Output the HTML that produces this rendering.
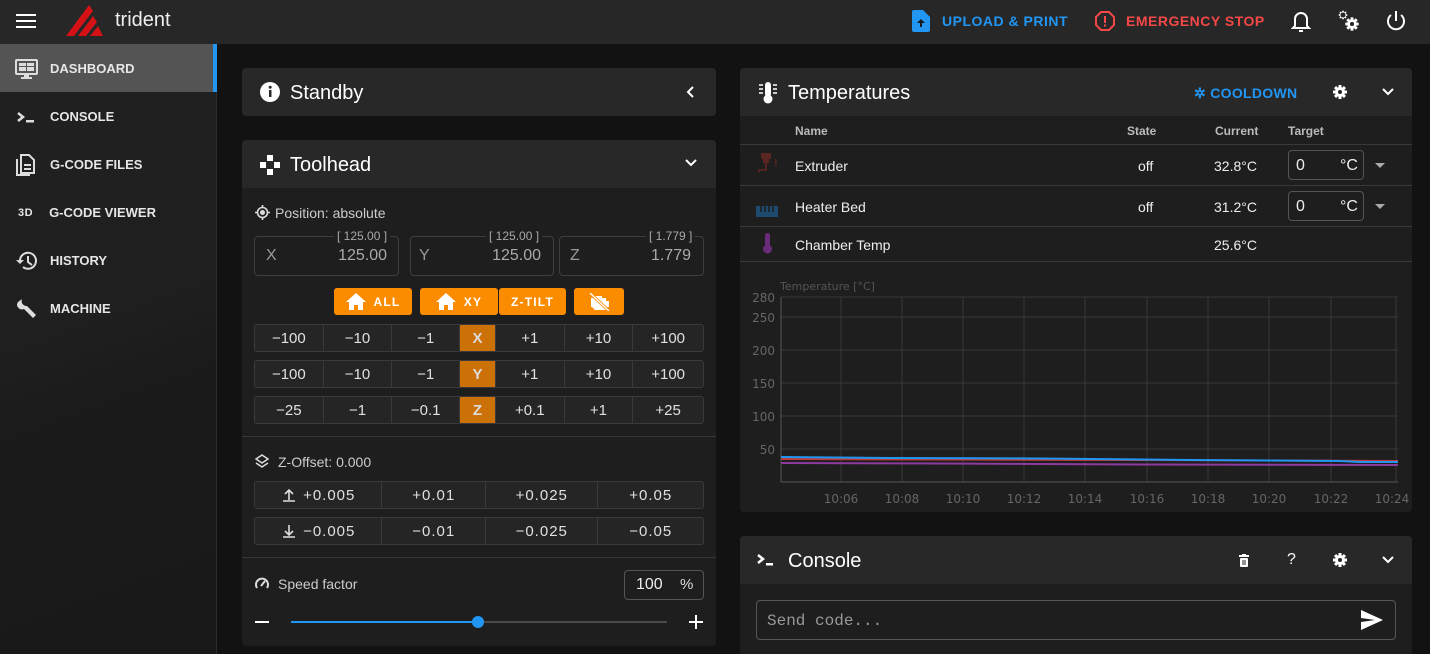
<!DOCTYPE html>
<html style="height:654px;overflow:hidden"><head><meta charset="utf-8"><style>
*{box-sizing:border-box;margin:0;padding:0}
body{width:1430px;height:654px;overflow:hidden;background:#121212;font-family:"Liberation Sans",sans-serif;color:#fff;position:relative}
.a{position:absolute}
.top{left:0;top:0;width:1430px;height:44px;background:#272727}
.side{left:0;top:44px;width:217px;height:610px;background:linear-gradient(160deg,#202020 0%,#1f1f1f 45%,#1a1a1a 60%,#191919 100%);border-right:1px solid #2c2c2c}
.nav{left:0;width:217px;height:47px;display:flex;align-items:center;font-size:13px;font-weight:bold;color:#e6e6e6}
.nav svg{margin-left:15px;margin-right:12px}
.card{background:#1e1e1e;border-radius:4px}
.hd{background:#282828;height:48px;border-radius:4px 4px 0 0;display:flex;align-items:center;font-size:20px;padding-top:2px}
.box{border:1px solid #3e3e3e;border-radius:4px}
.row{display:flex;border:1px solid #3a3a3a;border-radius:3px;overflow:hidden;background:#252525}
.row div{display:flex;align-items:center;justify-content:center;border-right:1px solid #3a3a3a;font-size:15px;color:#e0e0e0}
.row div:last-child{border-right:none}
.ax{background:#cc7108;color:#ddd!important;font-weight:bold}
.ob{background:#fb8c00;border-radius:3px;height:27px;top:288px;display:flex;align-items:center;justify-content:center;font-size:12px;font-weight:bold;letter-spacing:1.2px;color:#fff}
.th{font-size:12px;font-weight:bold;color:#bbb}
.t{font-size:14px;color:#eee}
</style></head><body>
<svg width="0" height="0" style="position:absolute"><defs>
<g id="gear"><circle cx="0" cy="0" r="5" fill="#fff"/><g fill="#fff"><rect x="-1.5" y="-7" width="3" height="14"/><rect x="-1.5" y="-7" width="3" height="14" transform="rotate(45)"/><rect x="-1.5" y="-7" width="3" height="14" transform="rotate(90)"/><rect x="-1.5" y="-7" width="3" height="14" transform="rotate(135)"/></g><circle cx="0" cy="0" r="2" fill="#282828"/></g>
</defs></svg>
<div class="a top"></div>
<svg class="a" style="left:16px;top:13px" width="20" height="16"><rect y="1" width="20" height="2" fill="#fff"/><rect y="7" width="20" height="2" fill="#fff"/><rect y="13" width="20" height="2" fill="#fff"/></svg>
<svg class="a" style="left:66px;top:5px" width="38" height="32"><polygon points="0,31 23,0 27,6 8,31" fill="#d41216"/><polygon points="12,31 27,11 31,17 20,31" fill="#d41216"/><polygon points="24,31 32,21 37,31" fill="#d41216"/></svg>
<div class="a" style="left:115px;top:9px;font-size:20px;color:#eee">trident</div>
<svg class="a" style="left:912px;top:10px" width="18" height="22"><path d="M0 2a2 2 0 0 1 2-2h9l7 7v13a2 2 0 0 1-2 2H2a2 2 0 0 1-2-2z" fill="#2196f3"/><path d="M9 9l-4 4h3v4h2v-4h3z" fill="#1b1b1b"/></svg>
<div class="a" style="left:942px;top:13px;font-size:14px;font-weight:bold;letter-spacing:0.5px;color:#2196f3">UPLOAD &amp; PRINT</div>
<svg class="a" style="left:1095px;top:11px" width="20" height="20"><polygon points="6,1 14,1 19,6 19,14 14,19 6,19 1,14 1,6" fill="none" stroke="#f44848" stroke-width="2"/><rect x="9" y="5" width="2" height="7" fill="#f44848"/><rect x="9" y="13.5" width="2" height="2" fill="#f44848"/></svg>
<div class="a" style="left:1126px;top:13px;font-size:14px;font-weight:bold;letter-spacing:0.5px;color:#f44848">EMERGENCY STOP</div>
<svg class="a" style="left:1291px;top:9px" width="20" height="24"><path d="M4 17V10a6 6 0 0 1 12 0v7l2 2H2z" fill="none" stroke="#fff" stroke-width="2"/><rect x="8" y="21" width="4" height="2" fill="#fff"/></svg>
<svg class="a" style="left:1337px;top:9px" width="24" height="24"><g transform="translate(6,6) scale(0.6)"><use href="#gear"/></g><rect x="3.5" y="3.5" width="5" height="5" rx="2.5" fill="#272727"/><g transform="translate(15,15) scale(0.95)"><use href="#gear"/></g><circle cx="15" cy="15" r="2" fill="#272727"/></svg>
<svg class="a" style="left:1385px;top:10px" width="22" height="22"><path d="M6 5a8 8 0 1 0 10 0" fill="none" stroke="#fff" stroke-width="2"/><rect x="10" y="1" width="2" height="10" fill="#fff"/></svg>

<div class="a side"></div>
<div class="a" style="left:0;top:44px;width:213px;height:48px;background:#545454"></div>
<div class="a" style="left:213px;top:44px;width:4px;height:48px;background:#2196f3"></div>
<div class="a nav" style="top:45px"><svg width="23" height="20"><rect x="1" y="1" width="21" height="14" rx="1" fill="none" stroke="#ddd" stroke-width="2"/><rect x="4" y="4" width="7" height="3" fill="#ddd"/><rect x="12" y="4" width="7" height="3" fill="#ddd"/><rect x="4" y="8" width="7" height="4" fill="#ddd"/><rect x="12" y="8" width="7" height="4" fill="#ddd"/><rect x="9" y="15" width="5" height="3" fill="#ddd"/><rect x="6" y="18" width="11" height="2" fill="#ddd"/></svg>DASHBOARD</div>
<div class="a nav" style="top:93px"><svg width="23" height="20"><path d="M3 6l5 4-5 4" fill="none" stroke="#ddd" stroke-width="2.5"/><rect x="11" y="13" width="8" height="2.5" fill="#ddd"/></svg>CONSOLE</div>
<div class="a nav" style="top:141px"><svg width="23" height="22"><path d="M2 5v16h13" fill="none" stroke="#ddd" stroke-width="2"/><path d="M6 1h8l5 5v13H6z" fill="none" stroke="#ddd" stroke-width="2"/><rect x="9" y="10" width="7" height="2" fill="#ddd"/><rect x="9" y="14" width="7" height="2" fill="#ddd"/></svg>G-CODE FILES</div>
<div class="a nav" style="top:189px"><span style="margin-left:18px;margin-right:16px;font-size:11px;font-weight:bold;letter-spacing:0.5px">3D</span>G-CODE VIEWER</div>
<div class="a nav" style="top:237px"><svg width="23" height="22"><path d="M5 11a8 8 0 1 1 3 6" fill="none" stroke="#ddd" stroke-width="2"/><path d="M1 10h8l-4 4z" fill="#ddd"/><path d="M13 6v6l4 3" fill="none" stroke="#ddd" stroke-width="2"/></svg>HISTORY</div>
<div class="a nav" style="top:285px"><svg width="23" height="22"><path d="M3 4l4-3 0 0a5 5 0 0 0 5 7l9 9-3 3-9-9a5 5 0 0 1-7-5z" fill="#ddd"/></svg>MACHINE</div>

<!-- Standby -->
<div class="a card" style="left:242px;top:68px;width:474px;height:48px"><div class="hd" style="padding-left:48px;border-radius:4px">Standby</div></div>
<svg class="a" style="left:260px;top:82px" width="20" height="20"><circle cx="10" cy="10" r="10" fill="#fff"/><rect x="9" y="8" width="2.5" height="7" fill="#282828"/><circle cx="10.2" cy="5.3" r="1.5" fill="#282828"/></svg>
<svg class="a" style="left:685px;top:85px" width="12" height="14"><path d="M8 2L3 7l5 5" fill="none" stroke="#fff" stroke-width="2"/></svg>

<!-- Toolhead -->
<div class="a card" style="left:242px;top:140px;width:474px;height:506px"><div class="hd" style="padding-left:48px">Toolhead</div></div>
<svg class="a" style="left:260px;top:155px" width="20" height="20"><rect x="7" y="0" width="6" height="6" fill="#fff"/><rect x="0" y="7" width="6" height="6" fill="#fff"/><rect x="14" y="7" width="6" height="6" fill="#fff"/><rect x="7" y="14" width="6" height="6" fill="#fff"/></svg>
<svg class="a" style="left:684px;top:157px" width="14" height="12"><path d="M2 3l5 5 5-5" fill="none" stroke="#fff" stroke-width="2"/></svg>
<svg class="a" style="left:255px;top:205px" width="15" height="15"><circle cx="7.5" cy="7.5" r="5" fill="none" stroke="#ddd" stroke-width="1.6"/><circle cx="7.5" cy="7.5" r="2.5" fill="#ddd"/><path d="M7.5 0v2.5M7.5 12.5V15M0 7.5h2.5M12.5 7.5H15" stroke="#ddd" stroke-width="1.6"/></svg>
<div class="a" style="left:275px;top:205px;font-size:14px;color:#ccc">Position: absolute</div>
<div class="a box" style="left:254px;top:236px;width:145px;height:40px"></div>
<div class="a box" style="left:410px;top:236px;width:144px;height:40px"></div>
<div class="a box" style="left:559px;top:236px;width:145px;height:40px"></div>
<div class="a" style="left:334px;top:229px;padding:0 3px;background:#1e1e1e;font-size:12px;color:#aaa">[ 125.00 ]</div>
<div class="a" style="left:486px;top:229px;padding:0 3px;background:#1e1e1e;font-size:12px;color:#aaa">[ 125.00 ]</div>
<div class="a" style="left:646px;top:229px;padding:0 3px;background:#1e1e1e;font-size:12px;color:#aaa">[ 1.779 ]</div>
<div class="a" style="left:266px;top:247px;font-size:16px;color:#999">X</div><div class="a" style="left:320px;top:247px;width:67px;text-align:right;font-size:16px;color:#aaa">125.00</div>
<div class="a" style="left:419px;top:247px;font-size:16px;color:#999">Y</div><div class="a" style="left:474px;top:247px;width:67px;text-align:right;font-size:16px;color:#aaa">125.00</div>
<div class="a" style="left:570px;top:247px;font-size:16px;color:#999">Z</div><div class="a" style="left:624px;top:247px;width:67px;text-align:right;font-size:16px;color:#aaa">1.779</div>
<div class="a ob" style="left:334px;width:78px"><svg width="20" height="17" style="margin-right:8px"><path d="M10 0L0 9h3v8h5v-5h4v5h5V9h3z" fill="#fff"/></svg>ALL</div>
<div class="a ob" style="left:420px;width:78px"><svg width="20" height="17" style="margin-right:8px"><path d="M10 0L0 9h3v8h5v-5h4v5h5V9h3z" fill="#fff"/></svg>XY</div>
<div class="a ob" style="left:499px;width:67px">Z-TILT</div>
<div class="a ob" style="left:574px;width:50px"><svg width="24" height="18"><path d="M4 5h3V3h8v2h4v3h3v6h-3v3H8l-3-3H4z" fill="#fff"/><path d="M3 0l19 18" stroke="#fb8c00" stroke-width="3"/><path d="M3 0l19 18" stroke="#fff" stroke-width="1.4"/></svg></div>
<div class="a row" style="left:254px;top:324px;width:450px;height:28px"><div style="width:69px">−100</div><div style="width:69px">−10</div><div style="width:68px">−1</div><div class="ax" style="width:36px">X</div><div style="width:69px">+1</div><div style="width:69px">+10</div><div style="width:70px">+100</div></div>
<div class="a row" style="left:254px;top:360px;width:450px;height:28px"><div style="width:69px">−100</div><div style="width:69px">−10</div><div style="width:68px">−1</div><div class="ax" style="width:36px">Y</div><div style="width:69px">+1</div><div style="width:69px">+10</div><div style="width:70px">+100</div></div>
<div class="a row" style="left:254px;top:396px;width:450px;height:28px"><div style="width:69px">−25</div><div style="width:69px">−1</div><div style="width:68px">−0.1</div><div class="ax" style="width:36px">Z</div><div style="width:69px">+0.1</div><div style="width:69px">+1</div><div style="width:70px">+25</div></div>
<div class="a" style="left:242px;top:436px;width:474px;height:1px;background:#363636"></div>
<svg class="a" style="left:255px;top:454px" width="14" height="14"><path d="M7 1l6 4-6 4-6-4z" fill="none" stroke="#ddd" stroke-width="1.5"/><path d="M1 9l6 4 6-4" fill="none" stroke="#ddd" stroke-width="1.5"/></svg>
<div class="a" style="left:278px;top:454px;font-size:14px;color:#ccc">Z-Offset: 0.000</div>
<div class="a row" style="left:254px;top:481px;width:450px;height:28px;letter-spacing:1px"><div style="width:128px"><svg width="16" height="16" style="margin-right:6px"><path d="M2 14h12M8 13V3M4 7l4-4 4 4" fill="none" stroke="#ddd" stroke-width="1.6"/></svg>+0.005</div><div style="width:104px">+0.01</div><div style="width:113px">+0.025</div><div style="width:105px">+0.05</div></div>
<div class="a row" style="left:254px;top:517px;width:450px;height:28px;letter-spacing:1px"><div style="width:128px"><svg width="16" height="16" style="margin-right:6px"><path d="M2 14h12M8 2v10M4 8l4 4 4-4" fill="none" stroke="#ddd" stroke-width="1.6"/></svg>−0.005</div><div style="width:104px">−0.01</div><div style="width:113px">−0.025</div><div style="width:105px">−0.05</div></div>
<div class="a" style="left:242px;top:557px;width:474px;height:1px;background:#363636"></div>
<svg class="a" style="left:255px;top:577px" width="14" height="13"><path d="M2 11a6 6 0 1 1 10 0" fill="none" stroke="#ddd" stroke-width="2"/><path d="M6 9l4-5" stroke="#ddd" stroke-width="2"/></svg>
<div class="a" style="left:278px;top:576px;font-size:14px;color:#ccc">Speed factor</div>
<div class="a box" style="left:624px;top:570px;width:80px;height:30px;border-color:#555"></div>
<div class="a" style="left:636px;top:576px;font-size:16px;color:#eee">100</div><div class="a" style="left:680px;top:576px;font-size:15px;color:#ddd">%</div>
<div class="a" style="left:255px;top:621px;width:14px;height:2px;background:#fff"></div>
<div class="a" style="left:291px;top:621px;width:187px;height:2px;background:#2196f3"></div>
<div class="a" style="left:478px;top:621px;width:189px;height:2px;background:#4a4a4a"></div>
<div class="a" style="left:472px;top:616px;width:12px;height:12px;border-radius:50%;background:#2196f3"></div>
<div class="a" style="left:689px;top:621px;width:14px;height:2px;background:#fff"></div><div class="a" style="left:695px;top:615px;width:2px;height:14px;background:#fff"></div>

<!-- Temperatures -->
<div class="a card" style="left:740px;top:68px;width:672px;height:444px"><div class="hd" style="padding-left:48px">Temperatures</div></div>
<svg class="a" style="left:758px;top:82px" width="20" height="22"><rect x="7" y="0" width="6" height="15" rx="3" fill="#fff"/><circle cx="10" cy="17" r="4.5" fill="#fff"/><path d="M1 3h4M1 7h4M1 11h4M15 3h4M15 7h4M15 11h4" stroke="#fff" stroke-width="1.5"/></svg>
<div class="a" style="left:1194px;top:85px;font-size:14px;font-weight:bold;letter-spacing:0.3px;color:#2196f3">✲ COOLDOWN</div>
<svg class="a" style="left:1332px;top:84px" width="16" height="16"><g transform="translate(8,8)"><use href="#gear"/></g></svg>
<svg class="a" style="left:1381px;top:86px" width="14" height="12"><path d="M2 3l5 5 5-5" fill="none" stroke="#fff" stroke-width="2"/></svg>
<div class="a th" style="left:795px;top:124px">Name</div><div class="a th" style="left:1127px;top:124px">State</div><div class="a th" style="left:1215px;top:124px">Current</div><div class="a th" style="left:1288px;top:124px">Target</div>
<div class="a" style="left:740px;top:144px;width:672px;height:1px;background:#3a3a3a"></div>
<div class="a" style="left:740px;top:185px;width:672px;height:1px;background:#3a3a3a"></div>
<div class="a" style="left:740px;top:226px;width:672px;height:1px;background:#3a3a3a"></div>
<div class="a" style="left:740px;top:261px;width:672px;height:1px;background:#3a3a3a"></div>
<svg class="a" style="left:755px;top:153px" width="24" height="24"><path d="M6 0h10v6h-2v4h-2v3h-2v-3H8V6H6z" fill="#5a2420"/><path d="M11 13v4H4v2" fill="none" stroke="#5a2420" stroke-width="1.8"/><rect x="20" y="6" width="1.6" height="5" fill="#5a2420"/><rect x="20" y="12" width="1.6" height="1.6" fill="#5a2420"/></svg>
<div class="a t" style="left:795px;top:158px">Extruder</div><div class="a t" style="left:1138px;top:158px">off</div><div class="a t" style="left:1214px;top:158px">32.8°C</div>
<div class="a box" style="left:1288px;top:150px;width:76px;height:30px;border-color:#555"></div><div class="a t" style="left:1296px;top:157px;font-size:16px">0</div><div class="a t" style="left:1340px;top:157px;font-size:16px">°C</div>
<div class="a" style="left:1375px;top:163px;border:5px solid transparent;border-top-color:#aaa"></div>
<svg class="a" style="left:756px;top:203px" width="22" height="14"><rect x="0" y="3" width="22" height="11" fill="#1e4a70"/><path d="M5 3v6M9 3v6M13 3v6M17 3v6" stroke="#1e1e1e" stroke-width="1.6"/></svg>
<div class="a t" style="left:795px;top:199px">Heater Bed</div><div class="a t" style="left:1138px;top:199px">off</div><div class="a t" style="left:1214px;top:199px">31.2°C</div>
<div class="a box" style="left:1288px;top:191px;width:76px;height:30px;border-color:#555"></div><div class="a t" style="left:1296px;top:198px;font-size:16px">0</div><div class="a t" style="left:1340px;top:198px;font-size:16px">°C</div>
<div class="a" style="left:1375px;top:204px;border:5px solid transparent;border-top-color:#aaa"></div>
<svg class="a" style="left:762px;top:233px" width="12" height="22"><rect x="3" y="0" width="5" height="14" rx="2.5" fill="#6a2b7a"/><circle cx="5.5" cy="16" r="4.5" fill="#6a2b7a"/></svg>
<div class="a t" style="left:795px;top:237px">Chamber Temp</div><div class="a t" style="left:1214px;top:237px">25.6°C</div>

<svg class="a" style="left:740px;top:270px" width="672" height="240" font-family="DejaVu Sans, sans-serif" font-size="12" fill="#666">
<text x="40" y="20" font-size="11" fill="#555">Temperature [°C]</text>
<g stroke="#383838" stroke-width="1">
<line x1="41" y1="27" x2="658" y2="27"/><line x1="41" y1="47" x2="658" y2="47"/><line x1="41" y1="80" x2="658" y2="80"/><line x1="41" y1="113" x2="658" y2="113"/><line x1="41" y1="146" x2="658" y2="146"/><line x1="41" y1="179" x2="658" y2="179"/>
<line x1="101" y1="27" x2="101" y2="212"/><line x1="162" y1="27" x2="162" y2="212"/><line x1="223" y1="27" x2="223" y2="212"/><line x1="284" y1="27" x2="284" y2="212"/><line x1="345" y1="27" x2="345" y2="212"/><line x1="407" y1="27" x2="407" y2="212"/><line x1="468" y1="27" x2="468" y2="212"/><line x1="529" y1="27" x2="529" y2="212"/><line x1="591" y1="27" x2="591" y2="212"/><line x1="656" y1="27" x2="656" y2="212"/>
</g>
<line x1="41" y1="27" x2="41" y2="212" stroke="#555"/><line x1="41" y1="212" x2="658" y2="212" stroke="#555"/>
<g text-anchor="end"><text x="35" y="32">280</text><text x="35" y="52">250</text><text x="35" y="85">200</text><text x="35" y="118">150</text><text x="35" y="151">100</text><text x="35" y="184">50</text></g>
<g text-anchor="middle"><text x="101" y="233">10:06</text><text x="162" y="233">10:08</text><text x="223" y="233">10:10</text><text x="284" y="233">10:12</text><text x="345" y="233">10:14</text><text x="407" y="233">10:16</text><text x="468" y="233">10:18</text><text x="529" y="233">10:20</text><text x="591" y="233">10:22</text><text x="652" y="233">10:24</text></g>
<polyline points="41,189 200,189.5 400,190 658,191" fill="none" stroke="#c03a3a" stroke-width="2"/>
<polyline points="41,187 150,188 300,188.5 450,190 600,191 620,192 658,192" fill="none" stroke="#2196f3" stroke-width="2"/>
<polyline points="41,193 200,193.5 400,194.5 658,195" fill="none" stroke="#8e3a9e" stroke-width="2"/>
</svg>

<!-- Console -->
<div class="a card" style="left:740px;top:536px;width:672px;height:118px;border-radius:4px 4px 0 0"><div class="hd" style="padding-left:48px">Console</div></div>
<svg class="a" style="left:756px;top:552px" width="22" height="16"><path d="M2 3l5 4-5 4" fill="none" stroke="#fff" stroke-width="2.5"/><rect x="10" y="11" width="7" height="2.5" fill="#fff"/></svg>
<svg class="a" style="left:1239px;top:554px" width="10" height="13"><rect x="0" y="1" width="10" height="2" fill="#fff"/><rect x="3" y="0" width="4" height="2" fill="#fff"/><rect x="1" y="4" width="8" height="9" rx="1" fill="#fff"/><path d="M4 6v5M6 6v5" stroke="#282828" stroke-width="1"/></svg>
<div class="a" style="left:1287px;top:551px;font-size:16px">?</div>
<svg class="a" style="left:1332px;top:552px" width="16" height="16"><g transform="translate(8,8)"><use href="#gear"/></g></svg>
<svg class="a" style="left:1381px;top:554px" width="14" height="12"><path d="M2 3l5 5 5-5" fill="none" stroke="#fff" stroke-width="2"/></svg>
<div class="a box" style="left:756px;top:600px;width:640px;height:40px;border-color:#555"></div>
<div class="a" style="left:767px;top:612px;font-family:'Liberation Mono',monospace;font-size:16px;color:#999">Send code...</div>
<svg class="a" style="left:1361px;top:610px" width="22" height="20"><path d="M0 0l22 10L0 20l0-8 14-2-14-2z" fill="#fff"/></svg>
</body></html>
